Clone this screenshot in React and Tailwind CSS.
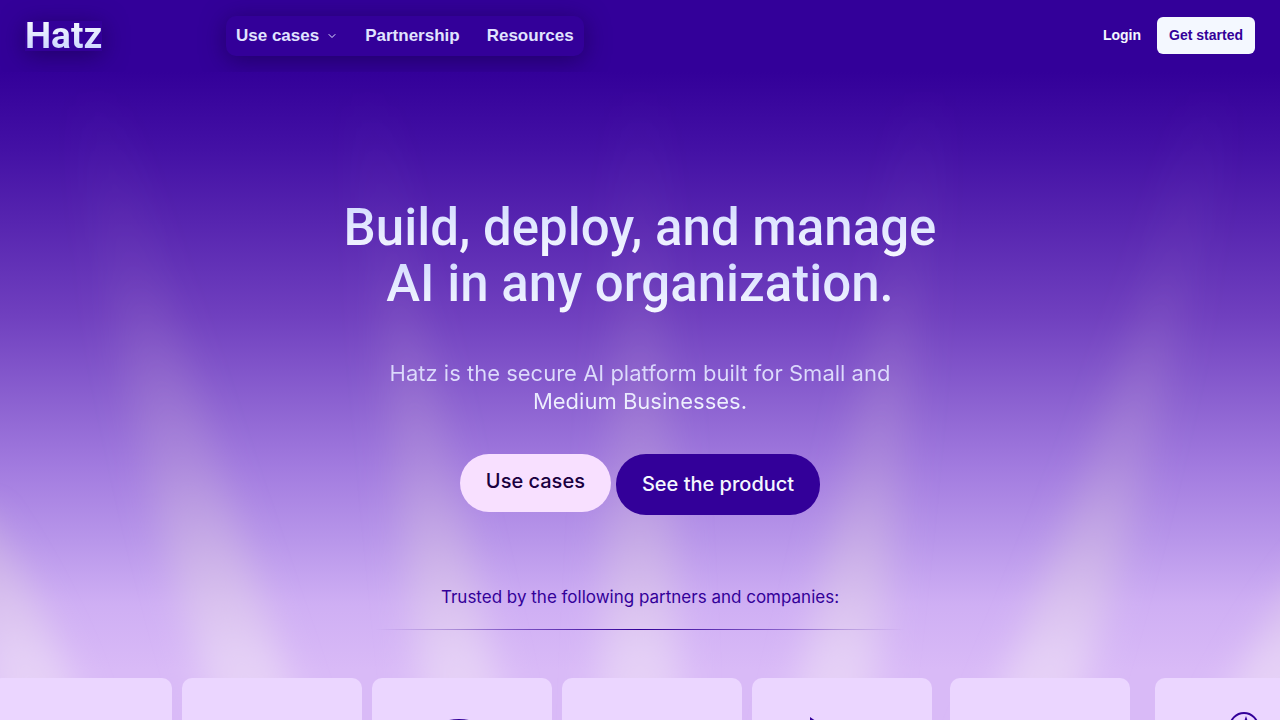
import { ChevronDown } from "lucide-react";

const partners = [
  { id: 1, margin: "mr-[10px]" },
  { id: 2, margin: "mr-[10px]" },
  { id: 3, margin: "mr-[10px]", mark: "arc" },
  { id: 4, margin: "mr-[10px]" },
  { id: 5, margin: "mr-[18px]", mark: "tip" },
  { id: 6, margin: "mr-[25px]" },
  { id: 7, margin: "", mark: "compass" },
];

// soft light beams rising behind the hero
function Beams() {
  return (
    <svg
      className="absolute inset-0 h-full w-full"
      viewBox="0 0 1280 720"
      preserveAspectRatio="none"
      aria-hidden="true"
    >
      <defs>
        <linearGradient id="beam" gradientUnits="userSpaceOnUse" x1="0" y1="80" x2="0" y2="720">
          <stop offset="0" stopColor="#c8a0c8" stopOpacity="0" />
          <stop offset="0.3" stopColor="#c0a0cc" stopOpacity="0.07" />
          <stop offset="0.6" stopColor="#c8b0d8" stopOpacity="0.3" />
          <stop offset="0.8" stopColor="#dcc8ea" stopOpacity="0.65" />
          <stop offset="0.9" stopColor="#e6d2f6" stopOpacity="0.9" />
          <stop offset="1" stopColor="#e8d5f7" stopOpacity="0.95" />
        </linearGradient>
        <filter id="soft" x="-10%" y="-10%" width="120%" height="120%">
          <feGaussianBlur stdDeviation="18 10" />
        </filter>
      </defs>
      <g fill="url(#beam)" filter="url(#soft)">
        <path d="M-80 500 Q-10 620 0 760 L95 760 Q60 620 -20 500Z" />
        <path d="M75 90 Q120 420 230 760 L315 760 Q200 420 115 90Z" />
        <path d="M350 90 Q390 420 430 760 L515 760 Q440 420 385 90Z" />
        <path d="M622 90 L598 760 L682 760 L658 90Z" />
        <path d="M905 90 Q865 420 780 760 L865 760 Q910 420 945 90Z" />
        <path d="M1190 90 Q1120 420 970 760 L1060 760 Q1170 420 1230 90Z" />
        <path d="M1340 520 Q1250 630 1200 760 L1300 760 Q1320 660 1360 560Z" />
      </g>
    </svg>
  );
}

function PartnerMark({ type }) {
  if (type === "arc") {
    return (
      <svg className="mt-10 h-12 w-20" viewBox="0 0 80 48" fill="none" stroke="#330099" strokeWidth="2" aria-hidden="true">
        <ellipse cx="37" cy="24" rx="32" ry="22" />
      </svg>
    );
  }
  if (type === "tip") {
    return (
      <svg className="mr-16 mt-9 h-12 w-12" viewBox="0 0 48 48" fill="#330099" aria-hidden="true">
        <path d="M24 3 L40 14 L24 9Z" />
      </svg>
    );
  }
  if (type === "compass") {
    return (
      <svg className="mt-8 h-8 w-8" viewBox="0 0 32 32" fill="none" stroke="#330099" strokeWidth="2" aria-hidden="true">
        <circle cx="15" cy="17" r="14" />
        <path d="M17 6 L20 15 L26 18 L19 20 L17 28 L14 20 L8 18 L14 15Z" fill="#330099" stroke="none" />
      </svg>
    );
  }
  return null;
}

function Header() {
  return (
    <header className="relative z-10 flex h-[72px] shrink-0 items-center overflow-hidden bg-[#330099] pl-[25px] pr-[25px] font-['Liberation_Sans',Arial,sans-serif] font-bold">
      <div className="flex w-[201px]">
        <a href="#" className="flex h-[30px] items-center shadow-[0_4px_24px_rgba(20,0,70,0.6)]">
          <span className="bg-linear-to-b from-[#f4f8ff] to-[#ccd6ff] bg-clip-text font-[Roboto,sans-serif] text-[37px] leading-[30px] font-bold text-transparent">
            Hatz
          </span>
        </a>
      </div>
      <nav className="flex h-10 items-center gap-[27px] rounded-[10px] bg-[#330099] px-[10px] text-[17px] text-[#e0e4ff] shadow-[0_4px_24px_rgba(20,0,70,0.6)]">
        <button type="button" className="flex items-center gap-[7px] font-bold">
          Use cases
          <ChevronDown size={12} strokeWidth={2} />
        </button>
        <a href="#partnership">Partnership</a>
        <a href="#resources">Resources</a>
      </nav>
      <div className="ml-auto flex items-center gap-4 pb-0.5 text-sm">
        <a href="#login" className="text-[#f4f8ff]">Login</a>
        <a href="#start" className="flex h-[37px] items-center rounded-md bg-[#f4f8ff] px-3 text-[#330099]">
          Get started
        </a>
      </div>
    </header>
  );
}

export default function App() {
  return (
    <div className="relative flex h-screen flex-col overflow-hidden bg-[#330099] font-[Inter,sans-serif]">
      <div className="absolute inset-0 bg-[linear-gradient(180deg,#330099_10%,#4411a5_21%,#5725b0_31%,#7040bf_44%,#8c62d1_56%,#a27bdf_65%,#b896ea_75%,#cfaff4_84%,#d9baf7_93%)]" />
      <Beams />
      <Header />
      <main className="relative flex min-h-0 flex-1 flex-col items-center">
        <h1 className="mt-32 text-center font-[Roboto,sans-serif] text-[51px] leading-[56px] font-medium">
          <span className="bg-linear-to-b from-[#d0d9ff] to-[#f6f8ff] box-decoration-clone bg-clip-text text-transparent">
            Build, deploy, and manage
            <br />
            AI in any organization.
          </span>
        </h1>
        <p className="mt-[47px] bg-linear-to-b from-[#d4d0fa] to-[#f4f8ff] bg-clip-text text-center text-[22px] leading-7 font-normal text-transparent">
          Hatz is the secure AI platform built for Small and
          <br />
          Medium Businesses.
        </p>
        <div className="mt-[39px] flex items-start gap-[5px] text-xl font-medium">
          <a href="#use-cases" className="rounded-[30px] bg-[#f8e0ff] px-[26px] pt-3 pb-4 leading-[30px] text-[#1a0040]">
            Use cases
          </a>
          <a href="#product" className="rounded-[30px] bg-[#330099] px-[26px] py-4 leading-[29px] text-[#f4f8ff]">
            See the product
          </a>
        </div>
        <p className="mt-[68px] text-[17px] leading-7 font-normal text-[#330099]">
          Trusted by the following partners and companies:
        </p>
        <div className="mt-[18px] h-px w-[530px] shrink-0 bg-linear-to-r from-transparent via-[#330099] to-transparent" />
        <div className="mt-12 -ml-2 flex self-start">
          {partners.map((p) => (
            <div
              key={p.id}
              className={`flex h-30 w-[180px] shrink-0 justify-center rounded-[10px] bg-[#ebd6ff] ${p.margin}`}
            >
              <PartnerMark type={p.mark} />
            </div>
          ))}
        </div>
      </main>
    </div>
  );
}
